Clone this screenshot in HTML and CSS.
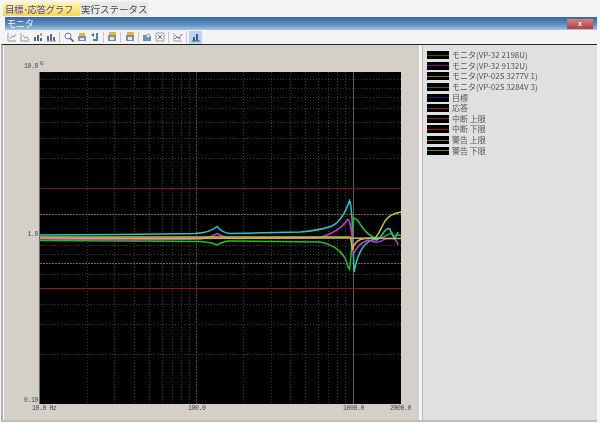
FILE: index.html
```html
<!DOCTYPE html>
<html>
    <head>
        <meta http-equiv="Content-Type" content="text/html; charset=UTF-8">
        <title>目標･応答グラフ</title>
        <link rel="stylesheet" href="styles.css">
    </head>
    <body>
        <div class="app">
            <div class="tabs">
                <div class="tab tab-active">目標･応答グラフ</div>
                <div class="tab">実行ステータス</div>
            </div>
            <div class="titlebar">
                <span class="title">モニタ</span>
                <span class="close">x</span>
            </div>
            <div class="toolbar">
                <svg class="tool" viewBox="0 0 10 10"><path d="M1 1v8h8M3 7l2-3 2 1 2-3" fill="none" stroke="#8f9dac"/></svg>
                <svg class="tool" viewBox="0 0 10 10"><path d="M1 1v8h8M3 3l2 3 2-1 2 3" fill="none" stroke="#8f9dac"/></svg>
                <svg class="tool" viewBox="0 0 10 10"><path d="M2 9V5M5 9V3M8 9V6" stroke="#5a6a80" stroke-width="2"/><path d="M7 4l1-3 1 3" fill="none" stroke="#c8a030"/></svg>
                <svg class="tool" viewBox="0 0 10 10"><path d="M2 9V4M5 9V2M8 9V5" stroke="#5a6a80" stroke-width="2"/><path d="M1 9h9" stroke="#8a9ab0"/></svg>
                <i class="sep"></i>
                <svg class="tool" viewBox="0 0 10 10"><circle cx="4" cy="4" r="3" fill="#eef4fa" stroke="#6a7a90"/><path d="M6 6l3.500 3.500" stroke="#46566e" stroke-width="1.500"/></svg>
                <svg class="tool" viewBox="0 0 10 10"><path d="M1 4h8v5H1z" fill="#8090a8"/><path d="M2 1h6v3H2z" fill="#e0b840"/><path d="M3 6h4v2H3z" fill="#e8e8e8"/></svg>
                <svg class="tool" viewBox="0 0 10 10"><path d="M6 1h2v8H3V7h3z" fill="#4a80b8"/><path d="M1 3l3-2v4z" fill="#3a70a8"/></svg>
                <i class="sep"></i>
                <svg class="tool" viewBox="0 0 10 10"><path d="M1 3h8v6H1z" fill="#8090a8"/><path d="M2 0h7v3H2z" fill="#e0b840"/><path d="M3 5h4v3H3z" fill="#e8e8e8"/></svg>
                <i class="sep"></i>
                <svg class="tool" viewBox="0 0 10 10"><path d="M1 3h8v6H1z" fill="#8090a8"/><path d="M2 0h7v3H2z" fill="#e0b840"/><path d="M3 5h4v3H3z" fill="#e8e8e8"/></svg>
                <i class="sep"></i>
                <svg class="tool" viewBox="0 0 10 10"><path d="M1 3h4l1 1h3v5H1z" fill="#7090b8"/><circle cx="6" cy="4" r="2" fill="#dde6f0" stroke="#5070a0" stroke-width=".6"/></svg>
                <svg class="tool" viewBox="0 0 10 10"><path d="M1 1h8v8H1z" fill="#f0f0f0" stroke="#a0a0a0"/><path d="M3 3l4 4M7 3L3 7" stroke="#707070"/></svg>
                <i class="sep"></i>
                <svg class="tool" viewBox="0 0 10 10"><path d="M1 1v8h8" fill="none" stroke="#a0a0b0"/><path d="M2 7l2-2 2 1 3-4" fill="none" stroke="#d04060"/><path d="M2 3l3 3 3 1" fill="none" stroke="#8090c8"/></svg>
                <i class="sep"></i>
                <span class="tool-on">
                    <svg class="tool" viewBox="0 0 10 10"><path d="M3 9V5M6 9V2" stroke="#3c5a90" stroke-width="2"/><path d="M1 9h8" stroke="#3c5a90"/></svg>
                </span>
            </div>
            <div class="main">
                <div class="plot-panel">
                    <svg class="chart" viewBox="4 45 415 375">
                        <rect x="39.500" y="72" width="361.500" height="332" fill="#000"/>
                        <path class="grid-v" d="M87.500 72V404M114.500 72V404M134.500 72V404M149.500 72V404M162.500 72V404M172.500 72V404M181.500 72V404M189.500 72V404M243.500 72V404M271.500 72V404M290.500 72V404M305.500 72V404M318.500 72V404M328.500 72V404M337.500 72V404M345.500 72V404"/>
                        <path class="grid-h" d="M40 79.500H401M40 88.500H401M40 97.500H401M40 108.500H401M40 122.500H401M40 138.500H401M40 158.500H401M40 245.500H401M40 254.500H401M40 274.500H401M40 304.500H401M40 324.500H401M40 354.500H401"/>
                        <path class="grid-decade" d="M196.500 72V404"/>
                        <path class="grid-major" d="M353.500 72V404"/>
                        <path class="limit-warn" d="M40 214.500H401M40 263.500H401"/>
                        <path class="limit-stop limit-stop-top" d="M40 188.500H401"/>
                        <path class="limit-stop" d="M40 288.500H401"/>

                        <path class="curve c-cyan" d="M40 235 120 234.500 160 234 195 233.500C205 233 212 231 217 226.500 220 230 223 233 230 233.500L300 232C315 231 325 228.500 332 226 340 222 345 214 349.500 200.500 352 206 352.500 225 354 272 356 262 358 254 363 247 368 241 372 238 377 240 381 238 386 226 390 229 393 238 395 241 398 232 401 240"/>
                        <path class="curve c-green" d="M40 240.500 120 241 200 241.500C208 242 213 243 217 245 221 243 224 241 230 241L320 242C332 244 340 250 345 258 347 263 348 268 349.500 269.500 351 262 352 240 353.500 218 355 218 357 219 360 224 365 232 370 236 375 238 382 239 388 234 392 233 395 240 398 232 401 236"/>
                        <path class="curve c-magenta" d="M40 239 130 240 200 239C208 238 213 236 217 233.500 221 236 225 238 235 238.500L320 237.500C332 234 342 228 348 219.500 351 222 352 232 353.500 254 356 248 360 243 368 240 374 242 378 244 385 239 392 238 396 237 398 245 401 238"/>
                        <path class="curve c-olive" d="M40 237H350C351 238 352 246 352.500 250 354 242 358 239 365 238.500L375 238C378 236 381 228 385 221 389 215 395 213 401 212"/>
                        <path class="curve c-tan" d="M40 238 130 238.500 340 238 401 238.500"/>
                    </svg>
                    <span class="axis-y axis-top">10.0</span>
                    <span class="axis-unit">G</span>
                    <span class="axis-y axis-mid">1.0</span>
                    <span class="axis-y axis-bottom">0.10</span>
                    <span class="axis-x axis-x1">10.0 Hz</span>
                    <span class="axis-x axis-x2">100.0</span>
                    <span class="axis-x axis-x3">1000.0</span>
                    <span class="axis-x axis-x4">2000.0</span>
                </div>
                <div class="splitter"></div>
                <div class="legend-panel">
                    <div class="legend-row"><span class="swatch sw-green"></span>モニタ(VP-32 2198U)</div>
                    <div class="legend-row"><span class="swatch sw-purple"></span>モニタ(VP-32 9132U)</div>
                    <div class="legend-row"><span class="swatch sw-olive"></span>モニタ(VP-02S 3277V 1)</div>
                    <div class="legend-row"><span class="swatch sw-teal"></span>モニタ(VP-02S 3284V 3)</div>
                    <div class="legend-row"><span class="swatch sw-blue"></span>目標</div>
                    <div class="legend-row"><span class="swatch sw-crimson"></span>応答</div>
                    <div class="legend-row"><span class="swatch sw-red"></span>中断 上限</div>
                    <div class="legend-row"><span class="swatch sw-red"></span>中断 下限</div>
                    <div class="legend-row"><span class="swatch sw-warn"></span>警告 上限</div>
                    <div class="legend-row"><span class="swatch sw-warn"></span>警告 下限</div>
                </div>
            </div>
        </div>
    </body>
</html>
```
FILE: styles.css
```css
/* Page */
body {
    margin: 0;
    background-color: #f7f7f7;
    font-family: "Noto Sans CJK JP", "Liberation Sans", sans-serif;
    overflow: hidden;
}
.app {
    width: 600px;
    height: 423px;
    filter: blur(0.45px);
    overflow: hidden;
}

/* Tabs */
.tabs {
    display: flex;
    height: 14px;
    padding: 2px 0 1px 3px;
    background-color: #f4f4f4;
}
.tab {
    width: 67px;
    padding-left: 1px;
    font-size: 9.5px;
    line-height: 14px;
    color: #444;
    background-color: #e9e9e9;
    white-space: nowrap;
}
.tab-active {
    width: 75px;
    padding-left: 2px;
    letter-spacing: -0.4px;
    color: #4a3fc0;
    background: linear-gradient(to bottom, #fff6b0, #f8d850);
}

/* Title bar */
.titlebar {
    display: flex;
    justify-content: space-between;
    align-items: center;
    height: 13px;
    margin: 0 3px 0 5px;
    background: linear-gradient(to bottom, #38689f, #5f90c0 60%, #a8c8e0);
}
.title {
    padding-left: 2px;
    font-size: 9px;
    line-height: 13px;
    color: #f4f8fc;
}
.close {
    width: 26px;
    height: 10px;
    margin-right: 4px;
    font: bold 8px/9px "Liberation Sans", sans-serif;
    text-align: center;
    color: #fff;
    background: linear-gradient(to bottom, #d88080, #b04040);
}

/* Toolbar */
.toolbar {
    display: flex;
    align-items: center;
    gap: 3px;
    height: 14px;
    padding-left: 7px;
    background-color: #f4f4f4;
}
.tool {
    width: 10px;
    height: 10px;
    flex: none;
}
.sep {
    width: 1px;
    height: 11px;
    margin: 0 0.25px;
    background-color: #c8c8c8;
}
.tool-on {
    display: flex;
    align-items: center;
    justify-content: center;
    width: 13px;
    height: 13px;
    margin-left: -1px;
    background-color: #bcd4ec;
}

/* Main area */
.main {
    display: flex;
    height: 375px;
    margin: 0 3px 0 1px;
    border-top: 1px solid #222;
    border-left: 2px solid #b0b0b0;
    border-bottom: 2px solid #c0c0c0;
    padding-left: 1px;
}
.plot-panel {
    position: relative;
    width: 415px;
    background-color: #d4d0c8;
}
.chart {
    display: block;
    width: 415px;
    height: 375px;
}
.splitter {
    width: 2px;
    margin-left: 1px;
    border-right: 1px solid #b8b8b8;
    background-color: #f4f4f4;
}
.legend-panel {
    flex: 1;
    padding: 5px 0 0 4px;
    background-color: #e0e0e0;
}

/* Chart */
.grid-v, .grid-h {
    fill: none;
    stroke: #3c3c3c;
    stroke-width: 1;
    stroke-dasharray: 1 2;
}
.grid-decade {
    fill: none;
    stroke: #484848;
    stroke-width: 1;
    stroke-dasharray: 2 1;
}
.grid-major {
    fill: none;
    stroke: #5c5c5c;
    stroke-width: 1;
}
.limit-warn {
    fill: none;
    stroke: #7c6a18;
    stroke-width: 1;
    stroke-dasharray: 2 1;
}
.limit-stop {
    fill: none;
    stroke: #a01020;
    stroke-width: 1;
}
.limit-stop-top {
    stroke: #7e1018;
}
.curve {
    fill: none;
    stroke-width: 1.5;
}
.c-cyan { stroke: #25c8c8; }
.c-green { stroke: #1fc01f; }
.c-magenta { stroke: #c838d0; }
.c-olive { stroke: #c8c818; }
.c-tan { stroke: #c8b070; }

.axis-y, .axis-x, .axis-unit {
    position: absolute;
    font: 6.5px/8px "Liberation Mono", monospace;
    letter-spacing: -0.4px;
    color: #444;
    white-space: nowrap;
}
.axis-y {
    right: 381px;
}
.axis-top { top: 18px; }
.axis-unit { top: 15px; left: 36px; font-size: 6px; }
.axis-mid { top: 186px; }
.axis-bottom { top: 352px; }
.axis-x { top: 360px; }
.axis-x1 { left: 28px; }
.axis-x2 { left: 184px; }
.axis-x3 { left: 339px; }
.axis-x4 { left: 386px; }

/* Legend */
.legend-row {
    display: flex;
    align-items: center;
    gap: 3px;
    height: 10.6px;
    font-size: 8px;
    line-height: 10px;
    color: #555;
    white-space: nowrap;
}
.swatch {
    width: 22px;
    height: 8px;
    flex: none;
    background-color: #000;
    background-image: linear-gradient(var(--line), var(--line));
    background-size: 100% 1px;
    background-position: center;
    background-repeat: no-repeat;
}
.sw-green { --line: #106810; }
.sw-purple { --line: #800890; }
.sw-olive { --line: #808000; }
.sw-teal { --line: #0a6a6a; }
.sw-blue { --line: #301080; }
.sw-crimson { --line: #a01050; }
.sw-red { --line: #a01018; }
.sw-warn { --line: #807020; }
```
